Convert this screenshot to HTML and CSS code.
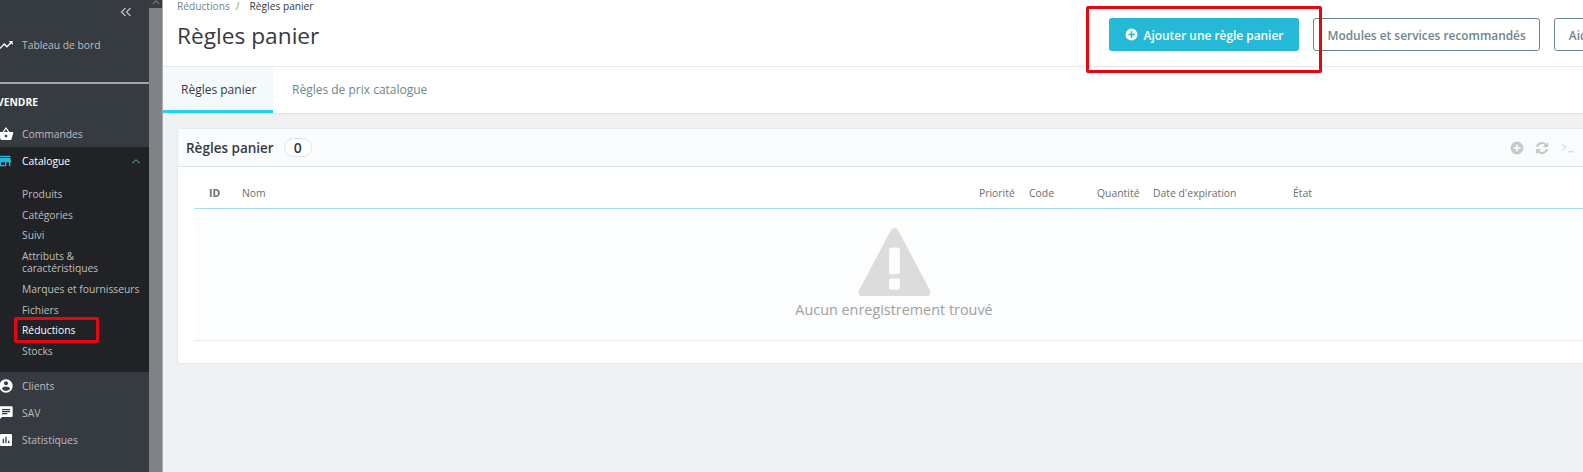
FILE: index.html
```html
<!DOCTYPE html>
<html lang="fr">
<head>
<meta charset="utf-8">
<title>Règles panier</title>
<link rel="stylesheet" href="styles.css">
</head>
<body>
<div class="app">
  <aside class="sidebar">
    <div class="collapse">
      <svg class="collapse-icon" viewBox="0 0 12 10"><path d="M5.5 1 1.5 5l4 4M10.5 1l-4 4 4 4"/></svg>
    </div>
    <a class="nav-item dash">
      <svg class="nav-icon" viewBox="0 0 24 24"><path d="M16 6l2.29 2.29-4.88 4.88-4-4L2 16.59 3.41 18l6-6 4 4 6.3-6.29L22 12V6z"/></svg>
      <span>Tableau de bord</span>
    </a>
    <div class="nav-title"><span class="nav-title-text">VENDRE</span></div>
    <a class="nav-item">
      <svg class="nav-icon" viewBox="0 0 24 24"><path d="M17.21 9l-4.38-6.56c-.19-.28-.51-.42-.83-.42-.32 0-.64.14-.83.43L6.79 9H2c-.55 0-1 .45-1 1 0 .09.01.18.04.27l2.54 9.27c.23.84 1 1.46 1.92 1.46h13c.92 0 1.69-.62 1.93-1.46l2.54-9.27L23 10c0-.55-.45-1-1-1h-4.79zM9 9l3-4.4L15 9H9zm3 8c-1.1 0-2-.9-2-2s.9-2 2-2 2 .9 2 2-.9 2-2 2z"/></svg>
      <span>Commandes</span>
    </a>
    <div class="nav-open">
      <a class="nav-item current">
        <svg class="nav-icon store" viewBox="0 0 24 24"><path d="M20 4H4v2h16V4zm1 10v-2l-1-5H4l-1 5v2h1v6h10v-6h4v6h2v-6h1zm-9 4H6v-4h6v4z"/></svg>
        <span>Catalogue</span>
        <svg class="chev" viewBox="0 0 12 8"><path d="M1.5 6 6 2l4.500 4"/></svg>
      </a>
      <ul class="sub">
        <li>Produits</li>
        <li>Catégories</li>
        <li>Suivi</li>
        <li>Attributs &amp; caractéristiques</li>
        <li>Marques et fournisseurs</li>
        <li>Fichiers</li>
        <li class="active">Réductions</li>
        <li>Stocks</li>
      </ul>
    </div>
    <a class="nav-item">
      <svg class="nav-icon" viewBox="0 0 24 24"><path d="M12 2C6.48 2 2 6.48 2 12s4.480 10 10 10 10-4.480 10-10S17.520 2 12 2zm0 3c1.660 0 3 1.340 3 3s-1.340 3-3 3-3-1.340-3-3 1.340-3 3-3zm0 14.200c-2.500 0-4.710-1.280-6-3.220.03-1.990 4-3.080 6-3.080 1.990 0 5.970 1.090 6 3.080-1.290 1.940-3.500 3.220-6 3.220z"/></svg>
      <span>Clients</span>
    </a>
    <a class="nav-item">
      <svg class="nav-icon" viewBox="0 0 24 24"><path d="M20 2H4c-1.100 0-1.990.9-1.990 2L2 22l4-4h14c1.100 0 2-.9 2-2V4c0-1.100-.9-2-2-2zM6 9h12v2H6V9zm8 5H6v-2h8v2zm4-6H6V6h12v2z"/></svg>
      <span>SAV</span>
    </a>
    <a class="nav-item">
      <svg class="nav-icon" viewBox="0 0 24 24"><path d="M19 3H5c-1.100 0-2 .9-2 2v14c0 1.100.9 2 2 2h14c1.100 0 2-.9 2-2V5c0-1.100-.9-2-2-2zM9 17H7v-7h2v7zm4 0h-2V7h2v10zm4 0h-2v-4h2v4z"/></svg>
      <span>Statistiques</span>
    </a>
    <div class="annot annot-side"></div>
  </aside>
  <div class="strip"><div class="strip-cap"><svg class="strip-arrow" viewBox="0 0 10 6"><path d="M1 5 5 1l4 4"/></svg></div></div>
  <main class="main">
    <header class="head">
      <div class="head-text">
        <div class="crumbs"><span class="crumb">Réductions</span><span class="sep">/</span><span class="crumb-now">Règles panier</span></div>
        <h1 class="title">Règles panier</h1>
      </div>
      <div class="actions">
        <a class="btn btn-primary">
          <svg class="btn-icon" viewBox="0 0 24 24"><path d="M12 1a11 11 0 1 0 0 22 11 11 0 0 0 0-22zm6 12.500h-4.500V18h-3v-4.500H6v-3h4.500V6h3v4.500H18z"/></svg>
          Ajouter une règle panier
        </a>
        <a class="btn btn-outline">Modules et services recommandés</a>
        <a class="btn btn-outline">Aide</a>
      </div>
      <div class="annot annot-top"></div>
    </header>
    <nav class="tabs">
      <a class="tab on">Règles panier</a>
      <a class="tab">Règles de prix catalogue</a>
    </nav>
    <section class="content">
      <div class="card">
        <div class="card-head">
          <span class="card-title">Règles panier</span>
          <span class="badge">0</span>
          <div class="tools">
            <svg class="tool" viewBox="0 0 24 24"><path d="M12 1a11 11 0 1 0 0 22 11 11 0 0 0 0-22zm6 12.500h-4.500V18h-3v-4.500H6v-3h4.500V6h3v4.500H18z"/></svg>
            <svg class="tool tool-refresh" viewBox="0 0 24 24"><path d="M12 1.500c2.900 0 5.500 1.100 7.400 3L22.500 1.500v9h-9l3.200-3.200A7 7 0 0 0 5.200 10H1.300A11 11 0 0 1 12 1.500zM1.500 13.500h9l-3.200 3.200A7 7 0 0 0 18.800 14h3.900a11 11 0 0 1-18.100 5.500L1.500 22.500z"/></svg>
            <svg class="tool term" viewBox="0 0 24 24"><path d="M2 6l7 5-7 5M12 18.500h10"/></svg>
          </div>
        </div>
        <div class="card-body">
          <table class="grid">
            <colgroup>
              <col class="c-id"><col class="c-name"><col class="c-prio"><col class="c-code"><col class="c-qty"><col class="c-date"><col class="c-state">
            </colgroup>
            <thead>
              <tr>
                <th class="id">ID</th><th>Nom</th><th>Priorité</th><th>Code</th><th>Quantité</th><th>Date d'expiration</th><th>État</th>
              </tr>
            </thead>
            <tbody>
              <tr>
                <td colspan="7" class="empty">
                  <svg class="warn" viewBox="0 1 68 66" preserveAspectRatio="none"><path fill-rule="evenodd" d="M30.500 3.500c1.800-3.200 5.200-3.200 7 0l29.500 58c1.400 3 0 5.500-3 5.500H4c-3 0-4.400-2.500-3-5.500zM29 22v22c0 1 .8 2 2 2h6c1.200 0 2-1 2-2V22c0-1-.8-2-2-2h-6c-1.200 0-2 1-2 2zm2 28c-1.200 0-2 .8-2 2v7c0 1.200.8 2 2 2h6c1.200 0 2-.8 2-2v-7c0-1.200-.8-2-2-2z"/></svg>
                  <div class="empty-text">Aucun enregistrement trouvé</div>
                </td>
              </tr>
            </tbody>
          </table>
        </div>
      </div>
    </section>
  </main>
</div>
</body>
</html>
```
FILE: styles.css
```css
* { box-sizing: border-box; }
html, body { margin: 0; padding: 0; height: 100%; }
body { width: 1583px; height: 472px; overflow: hidden; font-family: "Open Sans", "Liberation Sans", sans-serif; font-size: 10.300px; color: #363a41; background: #eff1f2; }
a { display: block; }

.app { display: flex; height: 472px; overflow: hidden; }

.sidebar { position: relative; flex: 0 0 149px; background: #363a41; color: #bebebe; overflow: hidden; }
.collapse { display: flex; justify-content: flex-end; height: 24px; padding: 7px 17px 0 0; }
.collapse-icon { width: 12px; height: 10px; fill: none; stroke: #bebebe; stroke-width: 1.300; }
.nav-item { display: flex; align-items: center; height: 27px; line-height: 14px; }
.nav-item.dash { margin-top: 7px; margin-bottom: 24px; }
.nav-icon { flex: none; width: 16px; height: 16px; margin: 0 8px 0 -2px; fill: #fff; }
.nav-title { height: 38px; padding-top: 10px; border-top: 2px solid #a0a4a9; color: #fff; font-weight: 700; font-size: 10.300px; line-height: 16px; }
.nav-title-text { display: block; margin-left: -3px; }
.nav-open { background: #202226; padding-bottom: 11px; }
.nav-item.current { color: #fff; padding-top: 1px; }
.store { fill: #25b9d7; margin-left: -3px; margin-right: 9px; }
.chev { width: 10px; height: 7px; margin-left: auto; margin-right: 8px; fill: none; stroke: #4f7f88; stroke-width: 1.500; }
.sub { list-style: none; margin: 10px 0 0; padding: 0 4px 0 22px; }
.sub li { padding: 4px 0; line-height: 12.600px; }
.sub li.active { color: #fff; }
.annot { position: absolute; border: 3px solid #e60510; border-radius: 2px; pointer-events: none; }
.annot-side { left: 14px; top: 317px; width: 85px; height: 26px; }

.strip { flex: 0 0 14px; background: #808285; border-right: 1px solid #a9aaac; }
.strip-cap { display: flex; justify-content: center; height: 8px; background: #3a3c40; }
.strip-arrow { width: 8px; height: 5px; fill: none; stroke: #77797c; stroke-width: 1.500; }

.main { flex: 1; min-width: 0; overflow: hidden; }
.head { position: relative; display: flex; height: 67px; background: #fff; border-bottom: 1px solid #e8eaeb; }
.head-text { flex: 0 0 946px; padding-left: 14px; }
.crumbs { display: flex; height: 12px; line-height: 12px; font-size: 10.200px; margin-bottom: 6px; }
.crumb { color: #6c868e; }
.sep { margin: 0 9px 0 6px; color: #7cb342; }
.crumb-now { margin-left: 1px; color: #363a41; }
.title { margin: 0; font-size: 22.700px; font-weight: 400; line-height: 36px; color: #363a41; }
.actions { display: flex; flex: none; gap: 14px; padding-top: 18px; }
.btn { display: flex; align-items: center; flex: none; height: 33px; border-radius: 3px; font-size: 11.900px; font-weight: 600; white-space: nowrap; }
.btn-primary { width: 190px; justify-content: center; gap: 6px; background: #25b9d7; color: #fff; }
.btn-icon { width: 13px; height: 13px; fill: #fff; }
.btn-outline { padding: 0 13.500px; background: #fff; border: 1px solid #6c868e; color: #6c868e; }
.annot-top { left: 923px; top: 6px; width: 236px; height: 67px; z-index: 2; }

.tabs { display: flex; height: 47px; background: #fff; border-bottom: 1px solid #dfe3e5; }
.tab { display: flex; align-items: center; padding: 0 16px 2px; font-size: 12px; color: #6c868e; margin-left: 3px; }
.tab.on { width: 110px; margin-left: 0; color: #363a41; background: #f4f9fc; border-bottom: 3px solid #25d0f0; padding: 1px 0 0 18px; }

.content { padding: 14px 0 0 14px; }
.card { width: 1434px; height: 236px; background: #fff; border: 1px solid #e5e9eb; border-radius: 4px; }
.card-head { display: flex; align-items: center; height: 38px; padding-left: 8px; background: #fafbfc; border-bottom: 1px solid #dbe6e9; }
.card-title { font-size: 13.500px; font-weight: 600; color: #363a41; }
.badge { margin-left: 10px; width: 28px; height: 19px; border: 1px solid #dbe6e9; border-radius: 10px; background: #fff; text-align: center; font-size: 14px; font-weight: 600; line-height: 17px; }
.tools { display: flex; align-items: center; gap: 11px; margin-left: auto; padding-right: 34px; }
.tool { width: 14px; height: 14px; fill: #c7c9ca; }
.term { width: 16px; fill: none; stroke: #c7c9ca; stroke-width: 1.600; }
.card-body { padding: 0 16px; }
.grid { table-layout: fixed; width: 1400px; border-collapse: collapse; }
.c-id { width: 48px; } .c-name { width: 737px; } .c-prio { width: 50px; } .c-code { width: 68px; } .c-qty { width: 56px; } .c-date { width: 140px; } .c-state { width: 301px; }
.grid th { height: 41px; padding: 12px 0 0; text-align: left; font-size: 10.400px; font-weight: 400; color: #6d6d6d; border-bottom: 1px solid #a8dcf2; vertical-align: middle; }
.grid th.id { font-weight: 700; padding-left: 15px; }
.empty { height: 132px; text-align: center; background: #fcfdfe; border-bottom: 1px solid #e8eaeb; padding: 19px 0 0; vertical-align: top; }
.warn { display: block; width: 73px; height: 68px; margin: 0 auto; fill: #dcdcdc; }
.empty-text { margin-top: 4px; font-size: 14.400px; color: #a0a0a0; line-height: 20px; }
```
